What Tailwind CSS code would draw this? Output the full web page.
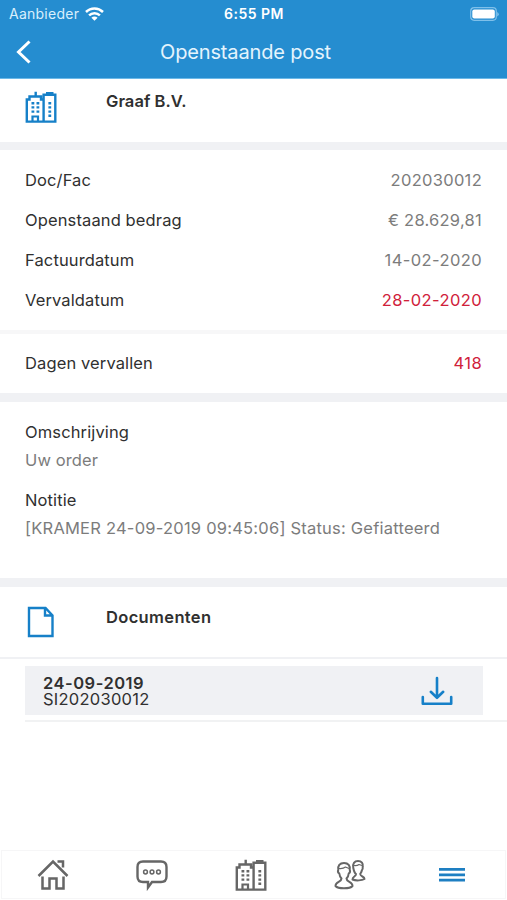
<!DOCTYPE html>
<html lang="nl">
<head>
    <meta charset="UTF-8">
    <meta name="viewport" content="width=device-width, initial-scale=1.0">
    <title>Openstaande post</title>
    <script src="https://cdn.jsdelivr.net/npm/@tailwindcss/browser@4"></script>
</head>
<body class="bg-white font-['Inter','Liberation_Sans',sans-serif] text-[16.5px] tracking-[0.12px] text-[#303030]">
    <!-- Gedeeld icoon: kantoorgebouw -->
    <svg class="hidden">
        <symbol id="building" viewBox="0 0 32 32">
            <path d="M1.800 30.600V8.500H4.500V5.500H16V8.500H18.600V30.600ZM18.600 30.600H30.300V3.800H18.600V8M10.700 5V0.800M21 2.200H28.500" fill="none" stroke="currentColor" stroke-width="2.400"/>
            <path d="M7.500 30.500V25.500H13V30.500" fill="none" stroke="currentColor" stroke-width="2.200"/>
            <path d="M6.500 11h2.800v2.400H6.500zM11.500 11h2.800v2.400h-2.800zM6.500 15.200h2.800v2.400H6.500zM11.500 15.200h2.800v2.400h-2.800zM6.500 19.400h2.800v2.400H6.500zM11.500 19.400h2.800v2.400h-2.800zM23.400 11h2.800v2.400h-2.800zM23.400 15.200h2.800v2.400h-2.800zM23.400 19.400h2.800v2.400h-2.800zM23.400 23.600h2.800V26h-2.800z" fill="currentColor"/>
        </symbol>
    </svg>

    <div class="h-[900px] w-[507px] flex flex-col overflow-hidden">
        <!-- Header -->
        <header class="h-[79px] shrink-0 bg-[#258dd0] text-white border-b border-[#6cb9e8]">
            <div class="h-[27px] grid grid-cols-3 items-center pl-[9px] pr-[8px]">
                <div class="flex items-center gap-1.5 text-[14px] tracking-[0.25px] text-[#d9effc]">
                    <span>Aanbieder</span>
                    <svg class="w-[19px] h-[14px] text-white" viewBox="0 0 19 14" fill="none" stroke="currentColor" stroke-width="2.500">
                        <path d="M1 5C5.800.3 13.200.3 18 5M4.100 8.300c3-2.900 7.800-2.900 10.800 0"/>
                        <path d="M9.500 13.800L6.400 10.700C8.200 9.100 10.800 9.100 12.600 10.700Z" fill="currentColor" stroke="none"/>
                    </svg>
                </div>
                <div class="text-center text-[14px] font-semibold tracking-[0.5px]">6:55 PM</div>
                <svg class="w-[29px] h-[14px] justify-self-end" viewBox="0 0 29 14">
                    <rect x=".7" y=".7" width="25.600" height="12.600" rx="3.500" fill="none" stroke="#7fc0ea" stroke-width="1.200"/>
                    <rect x="2.300" y="2.500" width="22.500" height="9" rx="2" fill="#fff"/>
                    <path d="M27.200 5v4.500q1.600-.8 1.600-2.250T27.200 5" fill="#7fc0ea"/>
                </svg>
            </div>
            <div class="h-[51px] grid grid-cols-[80px_1fr_80px] items-center">
                <svg class="w-[16px] h-[24px] ml-4 -mt-px" viewBox="0 0 16 24" fill="none" stroke="#fff" stroke-width="3">
                    <path d="M13.500 1.500L2.500 12L13.500 22.500"/>
                </svg>
                <h1 class="text-center text-[20px] leading-6 -mt-px -ml-4 tracking-[-0.15px] text-[#e4f4fd]">Openstaande post</h1>
            </div>
        </header>

        <!-- Relatie -->
        <section class="h-[71px] shrink-0 flex border-b-8 border-[#f0f1f4] pl-[25px]">
            <svg class="w-8 h-8 mt-3 text-[#1680c8]"><use href="#building"/></svg>
            <h2 class="ml-[49px] mt-[10px] font-semibold leading-6 tracking-[0.05px]">Graaf B.V.</h2>
        </section>

        <!-- Gegevens -->
        <section class="h-[184px] shrink-0 border-b-4 border-[#f7f7f8] px-[25px] pt-[10px]">
            <div class="h-[40.2px] flex justify-between items-center"><span>Doc/Fac</span><span class="tracking-[0.3px] text-[#7c7c7c]">202030012</span></div>
            <div class="h-[40.2px] flex justify-between items-center"><span>Openstaand bedrag</span><span class="tracking-[0.25px] text-[#7c7c7c]">€ 28.629,81</span></div>
            <div class="h-[40.2px] flex justify-between items-center"><span>Factuurdatum</span><span class="tracking-[0.4px] text-[#7c7c7c]">14-02-2020</span></div>
            <div class="h-[40.2px] flex justify-between items-center"><span>Vervaldatum</span><span class="tracking-[0.4px] text-[#d0213a]">28-02-2020</span></div>
        </section>
        <section class="h-[68px] shrink-0 flex justify-between items-center border-b-9 border-[#f0f1f4] px-[25px] pb-px">
            <span>Dagen vervallen</span><span class="tracking-[0.4px] text-[#d0213a]">418</span>
        </section>

        <!-- Omschrijving en notitie -->
        <section class="h-[185px] shrink-0 border-b-9 border-[#f0f1f4] px-[25px] pt-4 leading-7">
            <p>Omschrijving</p>
            <p class="text-[#7c7c7c]">Uw order</p>
            <p class="mt-3">Notitie</p>
            <p class="tracking-[0.22px] text-[#7c7c7c] whitespace-nowrap">[KRAMER 24-09-2019 09:45:06] Status: Gefiatteerd</p>
        </section>

        <!-- Documenten -->
        <section class="h-[72px] shrink-0 flex border-b-2 border-[#f0f1f4] pl-[27px]">
            <svg class="w-[28px] h-[32px] mt-[19px]" viewBox="0 0 28 32" fill="none" stroke="#1680c8" stroke-width="2.400">
                <path d="M2 2H18.500L25.500 9.500V30H2ZM18 2V9.500H25.500"/>
            </svg>
            <h2 class="ml-[51px] mt-[18px] font-semibold leading-6 tracking-[0.35px]">Documenten</h2>
        </section>
        <div class="h-[63px] shrink-0 ml-[25px] pt-[7px] border-b-2 border-[#f1f2f3]">
            <div class="h-[49px] w-[458px] bg-[#f0f1f4] flex items-center justify-between pl-[18px] pr-[30px]">
                <div class="leading-4">
                    <p class="font-semibold tracking-[0.5px]">24-09-2019</p>
                    <p class="tracking-[0.25px]">SI202030012</p>
                </div>
                <svg class="w-8 h-[30px]" viewBox="0 0 32 30" fill="none" stroke="#1680c8" stroke-width="2.600" stroke-linecap="round" stroke-linejoin="round">
                    <path d="M16 2V21.500M9.800 15.800L16 21.800L22.200 15.800M1.800 21V27.800H30.200V21"/>
                </svg>
            </div>
        </div>

        <!-- Navigatie onderaan -->
        <nav class="mt-auto mb-px mx-px h-[49px] border border-[#f6f6f7] shrink-0 grid grid-cols-[repeat(5,99.500px)] items-center justify-items-center pl-px text-[#666]">
            <svg class="w-8 h-8" viewBox="0 0 32 32" fill="none" stroke="currentColor" stroke-width="2.500">
                <path d="M1.500 17L16 2.500L30.500 17M5.500 17.500V29.500H12.500V19.500H19.500V29.500H26.500V17.500M20.500 2.500H26V8.500"/>
            </svg>
            <svg class="w-8 h-8" viewBox="0 0 32 32" fill="none" stroke="currentColor" stroke-width="2.400">
                <path d="M7 2.500H25Q30.500 2.500 30.500 8V17.500Q30.500 23 25 23H16L12 28.500V23H7Q1.500 23 1.500 17.500V8Q1.500 2.500 7 2.500Z"/>
                <g stroke-width="1.500"><circle cx="9.500" cy="13" r="1.900"/><circle cx="16" cy="13" r="1.900"/><circle cx="22.500" cy="13" r="1.900"/></g>
            </svg>
            <svg class="w-8 h-8 -translate-x-px"><use href="#building"/></svg>
            <svg class="w-8 h-8 -translate-x-px" viewBox="0 0 32 32" fill="none" stroke="currentColor" stroke-width="2" stroke-linejoin="round">
                <path d="M10 4C5.500 4 3.800 7 4.300 10.500C3.500 12.500 4.500 14 5.300 14.500C5.600 17 6.500 18.500 7.500 19.500C7.500 23.500 1.500 22.500 1.500 27C4 30 16 30 18.500 27C18.500 22.500 12.500 23.500 12.500 19.500C13.500 18.500 14.500 17 14.700 14.500C15.500 14 16.500 12.500 15.700 10.500C16.200 7 14.500 4 10 4Z"/>
                <path d="M19.300 9C18.300 4.500 20.500 2 24 2C27.500 2 29.500 4.500 28.700 8C29 10 28.300 11 27.800 11.500C27.500 13.500 26.500 14 26.200 15C26.500 18 30.500 17 30.500 20C28 21.500 22 22 18.500 20.500C18.500 17 22 18 22 15C20.500 14 20 12.500 19.300 9Z"/>
                <path d="M5 9.500Q9 10 11.500 8L15 9.500M20 6.500Q23 7 25 5.500L28 6.500" stroke-width="1.200"/>
            </svg>
            <svg class="w-[26px] h-[14px] translate-x-px text-[#1e7fc2]" viewBox="0 0 26 14" fill="currentColor">
                <path d="M0 0H26V2.800H0ZM0 5.400H26V8.200H0ZM0 10.800H26V13.600H0Z"/>
            </svg>
        </nav>
    </div>
</body>
</html>
